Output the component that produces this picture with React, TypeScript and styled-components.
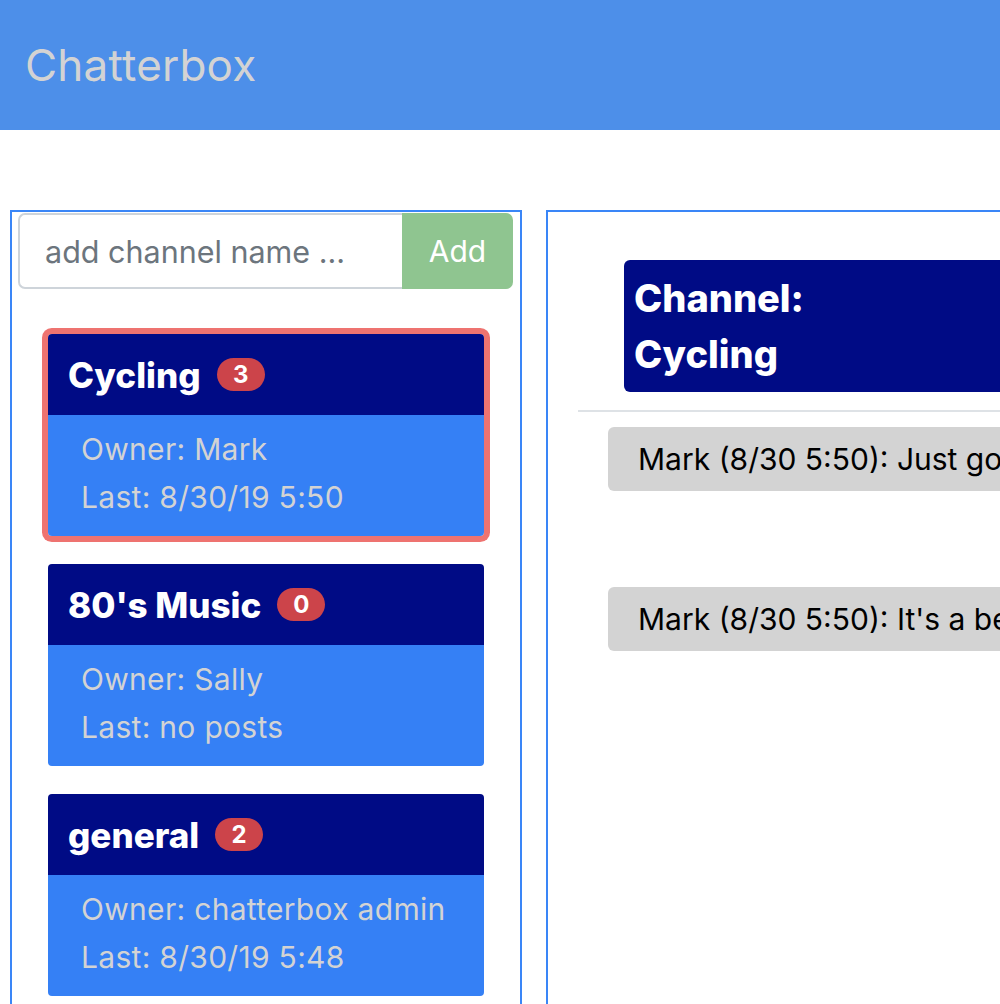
import React from 'react';
import styled, { createGlobalStyle } from 'styled-components';

interface Channel {
  name: string;
  count: number;
  owner: string;
  last: string;
}

interface Message {
  author: string;
  time: string;
  text: string;
}

const channels: Channel[] = [
  { name: 'Cycling', count: 3, owner: 'Mark', last: '8/30/19 5:50' },
  { name: "80's Music", count: 0, owner: 'Sally', last: 'no posts' },
  { name: 'general', count: 2, owner: 'chatterbox admin', last: '8/30/19 5:48' },
];

const messages: Message[] = [
  { author: 'Mark', time: '8/30 5:50', text: 'Just got back from a long ride' },
  { author: 'Mark', time: '8/30 5:50', text: "It's a beautiful day for cycling" },
];

const GlobalStyle = createGlobalStyle`
  html, body {
    margin: 0;
    padding: 0;
    overflow: hidden;
    background: #ffffff;
    font-family: Inter, "Liberation Sans", sans-serif;
  }
`;

const Header = styled.header`
  height: 130px;
  background: #4d8fe9;
  display: flex;
  align-items: center;
  padding-left: 25px;
`;

const Brand = styled.h1`
  margin: 0;
  font-size: 44px;
  font-weight: 400;
  color: #d3d3d3;
  letter-spacing: 0.2px;
`;

// the chat panel is wider than the window, as in the original
const Main = styled.main`
  display: flex;
  gap: 24px;
  padding: 80px 0 0 10px;
  width: 1600px;
`;

const Sidebar = styled.aside`
  width: 512px;
  height: 900px;
  border: 2px solid #3a86f7;
  padding: 1px 7px 0 6px;
  box-sizing: border-box;
  flex-shrink: 0;
`;

const InputGroup = styled.div`
  display: flex;
  height: 76px;
`;

const ChannelInput = styled.input`
  flex: 1;
  min-width: 0;
  border: 2px solid #ced4da;
  border-right: none;
  border-radius: 7px 0 0 7px;
  padding: 0 25px;
  font-family: inherit;
  font-size: 30.5px;
  color: #495057;
  &::placeholder {
    color: #6c757d;
  }
`;

const AddButton = styled.button`
  width: 111px;
  border: none;
  border-radius: 0 7px 7px 0;
  background: #8fc590;
  color: #ffffff;
  font-family: inherit;
  font-size: 30px;
`;

const CardList = styled.div`
  display: flex;
  flex-direction: column;
  gap: 28px;
  padding: 45px 29px 0 30px;
`;

const Card = styled.div<{ $active?: boolean }>`
  border-radius: 4px;
  overflow: hidden;
  box-shadow: ${(p) => (p.$active ? '0 0 0 6px #ee7370' : 'none')};
`;

const CardHeader = styled.div`
  height: 81px;
  background: #000b85;
  display: flex;
  align-items: center;
  padding-left: 20px;
  gap: 16px;
`;

const CardTitle = styled.span`
  font-size: 35px;
  font-weight: 800;
  color: #ffffff;
`;

const Badge = styled.span`
  min-width: 48px;
  height: 33px;
  padding: 0 14px;
  box-sizing: border-box;
  border-radius: 17px;
  background: #cc444a;
  color: #ffffff;
  font-size: 24px;
  font-weight: 700;
  display: flex;
  align-items: center;
  justify-content: center;
`;

const CardBody = styled.div`
  height: 121px;
  box-sizing: border-box;
  background: #3580f5;
  padding: 10px 0 0 33px;
  color: #d3d3d3;
  font-size: 30px;
  letter-spacing: 0.3px;
  line-height: 48px;
`;

const ChatPanel = styled.section`
  width: 1000px;
  height: 900px;
  border: 2px solid #3a86f7;
  box-sizing: border-box;
  padding-top: 48px;
  flex-shrink: 0;
`;

const ChannelTitle = styled.h2`
  margin: 0 0 18px 76px;
  background: #000b85;
  border-radius: 6px;
  padding: 10px 10px;
  color: #ffffff;
  font-size: 38px;
  font-weight: 800;
  line-height: 56px;
`;

const Divider = styled.hr`
  margin: 0 0 15px 30px;
  border: none;
  border-top: 2px solid #dee2e6;
`;

const MessageList = styled.div`
  display: flex;
  flex-direction: column;
  gap: 96px;
  padding-left: 60px;
`;

const Bubble = styled.div`
  height: 64px;
  display: flex;
  align-items: center;
  background: #d3d3d3;
  border-radius: 6px;
  padding-left: 30px;
  font-size: 30px;
  color: #000000;
  white-space: nowrap;
`;

const App: React.FC = () => {
  return (
    <>
      <GlobalStyle />
      <Header>
        <Brand>Chatterbox</Brand>
      </Header>
      <Main>
        <Sidebar>
          <InputGroup>
            <ChannelInput placeholder="add channel name ..." />
            <AddButton>Add</AddButton>
          </InputGroup>
          <CardList>
            {channels.map((c, i) => (
              <Card key={c.name} $active={i === 0}>
                <CardHeader>
                  <CardTitle>{c.name}</CardTitle>
                  <Badge>{c.count}</Badge>
                </CardHeader>
                <CardBody>
                  <div>Owner: {c.owner}</div>
                  <div>Last: {c.last}</div>
                </CardBody>
              </Card>
            ))}
          </CardList>
        </Sidebar>
        <ChatPanel>
          <ChannelTitle>
            Channel:
            <br />
            Cycling
          </ChannelTitle>
          <Divider />
          <MessageList>
            {messages.map((m, i) => (
              <Bubble key={i}>
                {m.author} ({m.time}): {m.text}
              </Bubble>
            ))}
          </MessageList>
        </ChatPanel>
      </Main>
    </>
  );
};

export default App;
